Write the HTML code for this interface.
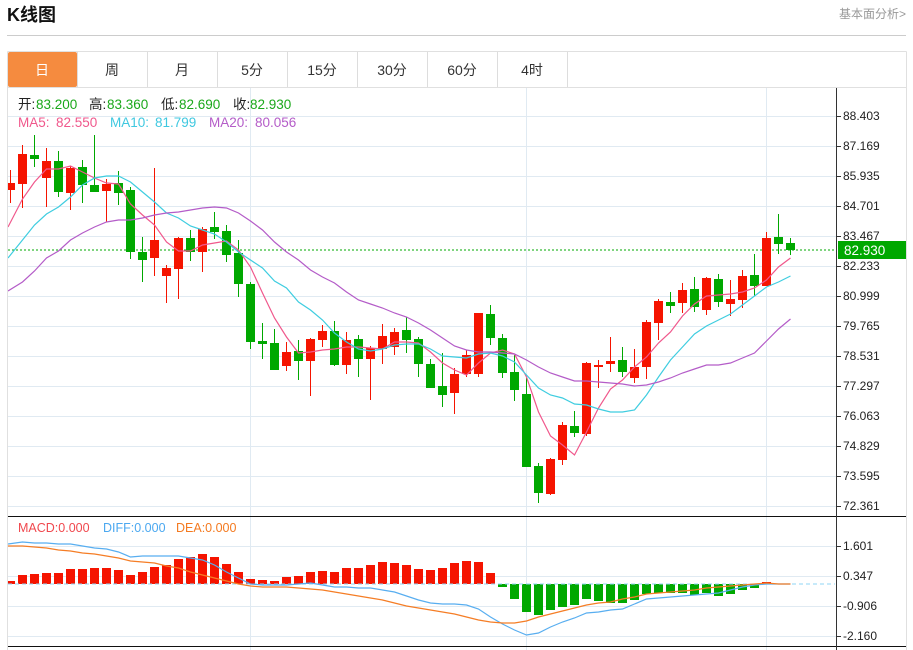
<!DOCTYPE html>
<html lang="zh"><head><meta charset="utf-8"><title>K线图</title>
<style>
html,body{margin:0;padding:0;background:#fff;width:913px;height:650px;overflow:hidden}
svg{display:block}
text{font-family:"Liberation Sans","Noto Sans CJK SC",sans-serif}
.t{font-size:14px;fill:#333;text-anchor:middle}
.a{font-size:12px;fill:#222}
.l{font-size:13.5px}
.m{font-size:12.5px}
</style></head><body>
<svg width="913" height="650" viewBox="0 0 913 650" xmlns="http://www.w3.org/2000/svg">
<text x="7" y="21" font-size="18" font-weight="bold" fill="#111">K线图</text>
<text x="839" y="18" font-size="12" fill="#999">基本面分析&gt;</text>
<path d="M7 35.5H906" stroke="#ccc" fill="none"/>
<rect x="8" y="52" width="69" height="35" rx="2" fill="#f58b3f"/>
<path d="M7.5 51.5H906.5M7.5 87.5H906.5M7.5 51.5V650M906.5 51.5V650" stroke="#e0e0e0" fill="none"/>
<path d="M77.5 52V87M147.5 52V87M217.5 52V87M287.5 52V87M357.5 52V87M427.5 52V87M497.5 52V87M567.5 52V87" stroke="#ddd" fill="none"/>
<text class="t" x="42" y="75" style="fill:#fff">日</text>
<text class="t" x="112" y="75">周</text>
<text class="t" x="182" y="75">月</text>
<text class="t" x="252" y="75">5分</text>
<text class="t" x="322" y="75">15分</text>
<text class="t" x="392" y="75">30分</text>
<text class="t" x="462" y="75">60分</text>
<text class="t" x="532" y="75">4时</text>

<!-- grid -->
<path d="M8 116.5H836M8 146.5H836M8 176.5H836M8 206.5H836M8 236.5H836M8 266.5H836M8 296.5H836M8 326.5H836M8 356.5H836M8 386.5H836M8 416.5H836M8 446.5H836M8 476.5H836M8 506.5H836M8 546.5H836M8 576.5H836M8 606.5H836M8 636.5H836M250.5 88V650M526.5 88V650M766.5 88V650" stroke="#e0eaf2" fill="none"/>

<!-- last price line -->
<path d="M8 250H835" stroke="#00a800" stroke-dasharray="2 2" fill="none"/>

<svg x="8" y="88" width="828" height="428" viewBox="8 88 828 428">
<!-- red wicks -->
<path fill="none" stroke="#f51400" d="M10.5 170V203M22.5 145V208M46.5 148V207M70.5 166V210M106.5 179V222M154.5 168V276M166.5 265V303M178.5 237V299M202.5 227V272M286.5 342V371M310.5 338V396M322.5 325V347M346.5 332V374M370.5 346V400M382.5 324V364M394.5 328V355M454.5 368V414M466.5 350V377M478.5 313V377M550.5 458V495M562.5 422V465M586.5 362V436M598.5 360V388M610.5 337V372M634.5 349V383M646.5 320V379M658.5 299V340M682.5 283V313M706.5 277V315M730.5 280V316M742.5 270V308M766.5 232V286"/>
<!-- green wicks -->
<path fill="none" stroke="#00a800" d="M34.5 135V167M58.5 151V197M82.5 160V203M94.5 135V192M118.5 171V205M130.5 187V259M142.5 237V282M190.5 230V261M214.5 212V239M226.5 225V262M238.5 240V297M250.5 282V349M262.5 323V359M274.5 329V370M298.5 340V380M334.5 321V366M358.5 335V377M406.5 317V353M418.5 337V377M430.5 359V388M442.5 353V407M490.5 305V345M502.5 334V378M514.5 355V401M526.5 378V467M538.5 463V503M574.5 411V437M622.5 347V377M670.5 292V313M694.5 277V312M718.5 274V307M754.5 254V296M778.5 214V254M790.5 238V255"/>
<!-- red bodies -->
<path fill="#f51400" d="M6 183h9V190h-9zM18 154h9V184h-9zM42 161h9V178h-9zM66 168h9V193h-9zM102 184h9V191h-9zM150 240h9V258h-9zM162 268h9V276h-9zM174 238h9V269h-9zM198 229h9V252h-9zM282 352h9V366h-9zM306 339h9V361h-9zM318 331h9V340h-9zM342 340h9V365h-9zM366 348h9V359h-9zM378 336h9V349h-9zM390 332h9V347h-9zM450 374h9V393h-9zM462 355h9V374h-9zM474 313h9V374h-9zM546 459h9V494h-9zM558 425h9V460h-9zM582 363h9V434h-9zM594 365h9V367h-9zM606 361h9V364h-9zM630 367h9V378h-9zM642 322h9V367h-9zM654 301h9V323h-9zM678 290h9V303h-9zM702 278h9V310h-9zM726 299h9V304h-9zM738 276h9V300h-9zM762 238h9V286h-9z"/>
<!-- green bodies -->
<path fill="#00a800" d="M30 155h9V159h-9zM54 161h9V192h-9zM78 167h9V185h-9zM90 185h9V192h-9zM114 183h9V193h-9zM126 190h9V252h-9zM138 252h9V260h-9zM186 238h9V252h-9zM210 227h9V232h-9zM222 231h9V255h-9zM234 253h9V284h-9zM246 284h9V342h-9zM258 341h9V344h-9zM270 343h9V370h-9zM294 351h9V361h-9zM330 331h9V365h-9zM354 339h9V359h-9zM402 330h9V340h-9zM414 339h9V364h-9zM426 364h9V388h-9zM438 386h9V395h-9zM486 314h9V338h-9zM498 338h9V373h-9zM510 372h9V390h-9zM522 394h9V467h-9zM534 466h9V493h-9zM570 426h9V433h-9zM618 360h9V372h-9zM666 302h9V306h-9zM690 289h9V307h-9zM714 279h9V302h-9zM750 275h9V286h-9zM774 237h9V244h-9zM786 243h9V250h-9z"/>
<!-- MA5 -->
<polyline fill="none" stroke="#f0588c" stroke-width="1.2" points="8,227 22.5,199 34.5,182 46.5,169 58.5,169 70.5,166 82.5,172 94.5,178 106.5,183 118.5,184 130.5,204 142.5,215 154.5,225 166.5,242 178.5,251 190.5,251 202.5,245 214.5,243 226.5,241 238.5,250 250.5,267 262.5,293 274.5,318 286.5,337 298.5,353 310.5,352 322.5,350 334.5,349 346.5,347 358.5,347 370.5,348 382.5,349 394.5,342 406.5,342 418.5,343 430.5,352 442.5,363 454.5,370 466.5,375 478.5,363 490.5,353 502.5,350 514.5,354 526.5,377 538.5,412 550.5,436 562.5,445 574.5,455 586.5,432 598.5,408 610.5,389 622.5,380 634.5,367 646.5,357 658.5,343 670.5,332 682.5,316 694.5,304 706.5,296 718.5,295 730.5,294 742.5,292 754.5,288 766.5,280 778.5,267 790.5,258"/>
<!-- MA10 -->
<polyline fill="none" stroke="#3fcde0" stroke-width="1.2" points="8,258 22.5,240 34.5,225 46.5,214 58.5,207 70.5,197 82.5,185 94.5,178 106.5,176 118.5,176 130.5,182 142.5,192 154.5,202 166.5,213 178.5,218 190.5,226 202.5,230 214.5,234 226.5,242 238.5,252 250.5,260 262.5,268 274.5,281 286.5,288 298.5,302 310.5,310 322.5,320 334.5,333 346.5,342 358.5,349 370.5,351 382.5,349 394.5,345 406.5,344 418.5,344 430.5,349 442.5,356 454.5,357 466.5,358 478.5,354 490.5,353 502.5,356 514.5,362 526.5,375 538.5,388 550.5,395 562.5,398 574.5,404 586.5,405 598.5,409 610.5,412 622.5,412 634.5,410 646.5,395 658.5,377 670.5,360 682.5,347 694.5,334 706.5,326 718.5,320 730.5,314 742.5,305 754.5,296 766.5,287 778.5,282 790.5,276"/>
<!-- MA20 -->
<polyline fill="none" stroke="#b45cc8" stroke-width="1.2" points="8,291 22.5,282 34.5,271 46.5,258 58.5,251 70.5,240 82.5,233 94.5,227 106.5,222 118.5,220 130.5,220 142.5,218 154.5,215 166.5,213 178.5,212 190.5,210 202.5,208 214.5,207 226.5,208 238.5,213 250.5,221 262.5,230 274.5,242 286.5,252 298.5,260 310.5,270 322.5,277 334.5,283 346.5,292 358.5,300 370.5,304 382.5,308 394.5,313 406.5,317 418.5,323 430.5,330 442.5,338 454.5,346 466.5,350 478.5,352 490.5,352 502.5,353 514.5,354 526.5,360 538.5,367 550.5,373 562.5,377 574.5,381 586.5,381 598.5,382 610.5,383 622.5,384 634.5,386 646.5,385 658.5,382 670.5,378 682.5,373 694.5,369 706.5,365 718.5,365 730.5,363 742.5,358 754.5,353 766.5,341 778.5,329 790.5,319"/>
</svg>

<text class="l" x="18" y="109" fill="#222">开:</text><text class="l" x="36" y="109" fill="#1aa81a">83.200</text>
<text class="l" x="89" y="109" fill="#222">高:</text><text class="l" x="107" y="109" fill="#1aa81a">83.360</text>
<text class="l" x="161" y="109" fill="#222">低:</text><text class="l" x="179" y="109" fill="#1aa81a">82.690</text>
<text class="l" x="233" y="109" fill="#222">收:</text><text class="l" x="250" y="109" fill="#1aa81a">82.930</text>
<text class="l" x="18" y="127" fill="#f0588c">MA5:</text><text class="l" x="56" y="127" fill="#f0588c">82.550</text>
<text class="l" x="110" y="127" fill="#3fc8e0">MA10:</text><text class="l" x="155" y="127" fill="#3fc8e0">81.799</text>
<text class="l" x="209" y="127" fill="#b45cc8">MA20:</text><text class="l" x="255" y="127" fill="#b45cc8">80.056</text>

<!-- MACD panel -->
<svg x="8" y="517" width="828" height="129" viewBox="8 517 828 129">
<path fill="#f51400" d="M6 581h9V584h-9zM18 575h9V584h-9zM30 574h9V584h-9zM42 573h9V584h-9zM54 573h9V584h-9zM66 569h9V584h-9zM78 569h9V584h-9zM90 568h9V584h-9zM102 568h9V584h-9zM114 570h9V584h-9zM126 575h9V584h-9zM138 572h9V584h-9zM150 567h9V584h-9zM162 565h9V584h-9zM174 559h9V584h-9zM186 557h9V584h-9zM198 554h9V584h-9zM210 557h9V584h-9zM222 564h9V584h-9zM234 572h9V584h-9zM246 579h9V584h-9zM258 580h9V584h-9zM270 581h9V584h-9zM282 577h9V584h-9zM294 576h9V584h-9zM306 572h9V584h-9zM318 571h9V584h-9zM330 572h9V584h-9zM342 568h9V584h-9zM354 568h9V584h-9zM366 565h9V584h-9zM378 562h9V584h-9zM390 563h9V584h-9zM402 565h9V584h-9zM414 569h9V584h-9zM426 570h9V584h-9zM438 568h9V584h-9zM450 563h9V584h-9zM462 561h9V584h-9zM474 562h9V584h-9zM486 573h9V584h-9zM762 582h9V584h-9z"/>
<path fill="#00a800" d="M498 584h9V587h-9zM510 584h9V599h-9zM522 584h9V612h-9zM534 584h9V615h-9zM546 584h9V610h-9zM558 584h9V607h-9zM570 584h9V605h-9zM582 584h9V599h-9zM594 584h9V601h-9zM606 584h9V603h-9zM618 584h9V603h-9zM630 584h9V600h-9zM642 584h9V594h-9zM654 584h9V593h-9zM666 584h9V593h-9zM678 584h9V593h-9zM690 584h9V595h-9zM702 584h9V593h-9zM714 584h9V596h-9zM726 584h9V594h-9zM738 584h9V590h-9zM750 584h9V588h-9z"/>
<path d="M8 584H835" stroke="#8fd4f5" stroke-dasharray="4 3" fill="none"/>
<polyline fill="none" stroke="#58aef0" stroke-width="1.2" points="8,544 22.5,542 34.5,543 46.5,543 58.5,544 70.5,544 82.5,546 94.5,548 106.5,549 118.5,552 130.5,557 142.5,556 154.5,556 166.5,556 178.5,556 190.5,558 202.5,560 214.5,565 226.5,572 238.5,578 250.5,584 262.5,585 274.5,585 286.5,585 298.5,584 310.5,583 322.5,585 334.5,587 346.5,587 358.5,588 370.5,588 382.5,590 394.5,592 406.5,596 418.5,600 430.5,603 442.5,604 454.5,604 466.5,605 478.5,609 490.5,617 502.5,624 514.5,630 526.5,635 538.5,633 550.5,627 562.5,622 574.5,618 586.5,613 598.5,612 610.5,610 622.5,609 634.5,604 646.5,599 658.5,598 670.5,597 682.5,596 694.5,595 706.5,594 718.5,593 730.5,590 742.5,587 754.5,585 766.5,584 778.5,584 790.5,584"/>
<polyline fill="none" stroke="#f57d25" stroke-width="1.2" points="8,546 22.5,546 34.5,547 46.5,548 58.5,550 70.5,551 82.5,553 94.5,554 106.5,556 118.5,558 130.5,561 142.5,562 154.5,563 166.5,566 178.5,568 190.5,572 202.5,575 214.5,578 226.5,581 238.5,584 250.5,586 262.5,587 274.5,587 286.5,587 298.5,588 310.5,589 322.5,590 334.5,592 346.5,594 358.5,596 370.5,598 382.5,600 394.5,603 406.5,606 418.5,608 430.5,610 442.5,612 454.5,614 466.5,617 478.5,620 490.5,622 502.5,623 514.5,623 526.5,621 538.5,617 550.5,614 562.5,611 574.5,608 586.5,605 598.5,603 610.5,602 622.5,599 634.5,597 646.5,594 658.5,593 670.5,592 682.5,591 694.5,590 706.5,588 718.5,587 730.5,586 742.5,585 754.5,584 766.5,583 778.5,584 790.5,584"/>
</svg>
<text class="m" x="18" y="532" fill="#f0484e">MACD:0.000</text>
<text class="m" x="103" y="532" fill="#4ba8f0">DIFF:0.000</text>
<text class="m" x="176" y="532" fill="#f47a20">DEA:0.000</text>

<!-- axes -->
<path d="M8 516.5H906M8 646.5H906" stroke="#111" fill="none"/>
<path d="M836.5 88V650" stroke="#333" fill="none"/>
<path d="M837 116.5h4M837 146.5h4M837 176.5h4M837 206.5h4M837 236.5h4M837 266.5h4M837 296.5h4M837 326.5h4M837 356.5h4M837 386.5h4M837 416.5h4M837 446.5h4M837 476.5h4M837 506.5h4M837 546.5h4M837 576.5h4M837 606.5h4M837 636.5h4" stroke="#333" fill="none"/>
<g>
<text class="a" x="843" y="120">88.403</text>
<text class="a" x="843" y="150">87.169</text>
<text class="a" x="843" y="180">85.935</text>
<text class="a" x="843" y="210">84.701</text>
<text class="a" x="843" y="240">83.467</text>
<text class="a" x="843" y="270">82.233</text>
<text class="a" x="843" y="300">80.999</text>
<text class="a" x="843" y="330">79.765</text>
<text class="a" x="843" y="360">78.531</text>
<text class="a" x="843" y="390">77.297</text>
<text class="a" x="843" y="420">76.063</text>
<text class="a" x="843" y="450">74.829</text>
<text class="a" x="843" y="480">73.595</text>
<text class="a" x="843" y="510">72.361</text>
<text class="a" x="843" y="550">1.601</text>
<text class="a" x="843" y="580">0.347</text>
<text class="a" x="843" y="610">-0.906</text>
<text class="a" x="843" y="640">-2.160</text>
</g>
<rect x="838" y="241" width="68" height="18" fill="#00a800"/>
<text x="844" y="255" font-size="13.5" fill="#fff">82.930</text>
</svg>
</body></html>
